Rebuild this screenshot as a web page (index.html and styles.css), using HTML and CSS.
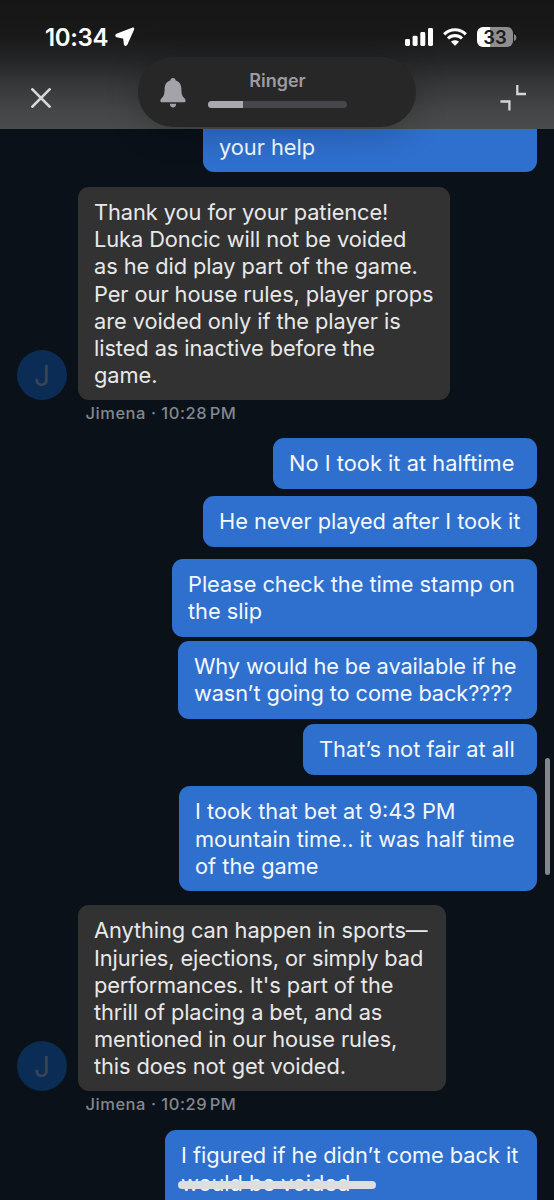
FILE: index.html
```html
<!DOCTYPE html>
<html lang="en">
<head>
<meta charset="utf-8">
<title>Support chat</title>
<link rel="stylesheet" href="styles.css">
</head>
<body>
<div class="phone">
  <header class="header">
    <div class="status">
      <div class="clock">
        <span class="time">10:34</span>
        <svg class="arrow" width="20" height="20" viewBox="0 0 20 20"><path d="M17.3 1.4 1.8 7.6C.8 8 .9 9.3 1.9 9.5L8.9 11 9.7 17.3C9.9 18.4 11.1 18.5 11.6 17.5L18.3 2.4C18.7 1.5 18.2 1 17.3 1.4Z" fill="#fff" stroke="#fff" stroke-width="1.6" stroke-linejoin="round"/></svg>
      </div>
      <div class="indicators">
        <svg width="28" height="18" viewBox="0 0 28 18" fill="#fff"><rect x="0" y="11" width="5" height="7" rx="1.4"/><rect x="7.6" y="7.8" width="5" height="10.2" rx="1.4"/><rect x="15.3" y="4" width="5" height="14" rx="1.4"/><rect x="23" y="0" width="5" height="18" rx="1.4"/></svg>
        <svg class="wifi" width="24" height="18" viewBox="0 0 24 18"><g fill="none" stroke="#fff" stroke-width="3.1"><path d="M1.2 6.3C7.3.2 16.7.2 22.8 6.3"/><path d="M5 10.5C9 6.7 15 6.7 19 10.5"/></g><path d="M8 13.8C10.2 11.8 13.8 11.8 16 13.8L12.6 17.2Q12 17.8 11.4 17.2Z" fill="#fff"/></svg>
        <div class="battery"><span>33</span></div>
        <svg class="nub" width="3" height="7" viewBox="0 0 3 7"><path d="M0 0Q2.4 1 2.4 3.5T0 7Z" fill="#8b8b8c"/></svg>
      </div>
    </div>
    <div class="toolbar">
      <svg width="20" height="20" viewBox="0 0 20 20"><path d="M1.4 1.4 18.6 18.6M18.6 1.4 1.4 18.6" stroke="#d8d8da" stroke-width="2.7" stroke-linecap="round"/></svg>
      <svg class="collapse" width="26" height="26" viewBox="0 0 26 26"><path d="M17.3 0V9H26M.4 16.5H9.4V25.6" fill="none" stroke="#d5d5d6" stroke-width="2.3"/></svg>
    </div>
  </header>
  <div class="ringer">
    <svg class="bell" width="26" height="30" viewBox="0 0 26 30" fill="#a4a3a9"><path d="M13 0C14.6 0 15.5 1 15.7 2.4 19.5 3.4 21.3 6.7 21.4 10.8 21.5 16 22 17.7 24 19.8 25.1 21 25.6 21.7 25.6 22.7 25.6 23.8 24.9 24.3 23.7 24.3H2.3C1.1 24.3.4 23.8.4 22.7.4 21.7.9 21 2 19.8 4 17.7 4.5 16 4.6 10.8 4.7 6.7 6.5 3.4 10.3 2.4 10.5 1 11.4 0 13 0Z"/><path d="M9.8 25.7H16.2C16 28.2 14.8 29.5 13 29.5S10 28.2 9.8 25.7Z"/></svg>
    <div class="ringer-level">
      <span>Ringer</span>
      <div class="track"><div class="fill"></div></div>
    </div>
  </div>
  <main class="chat">
    <div class="bubble sent clipped">your help</div>
    <section class="received-row first">
      <div class="avatar">J</div>
      <div class="bubble received patience">Thank you for your patience!<br>Luka Doncic will not be voided<br>as he did play part of the game.<br>Per our house rules, player props<br>are voided only if the player is<br>listed as inactive before the<br>game.</div>
    </section>
    <div class="meta">Jimena · 10:28<span class="thin-space"></span>PM</div>
    <div class="bubble sent halftime">No I took it at halftime</div>
    <div class="bubble sent never">He never played after I took it</div>
    <div class="bubble sent stamp">Please check the time stamp on<br>the slip</div>
    <div class="bubble sent why">Why would he be available if he<br>wasn’t going to come back????</div>
    <div class="bubble sent fair">That’s not fair at all</div>
    <div class="bubble sent bet">I took that bet at 9:43 PM<br>mountain time.. it was half time<br>of the game</div>
    <section class="received-row second">
      <div class="avatar">J</div>
      <div class="bubble received anything">Anything can happen in sports—<br>Injuries, ejections, or simply bad<br>performances. It's part of the<br>thrill of placing a bet, and as<br>mentioned in our house rules,<br>this does not get voided.</div>
    </section>
    <div class="meta">Jimena · 10:29<span class="thin-space"></span>PM</div>
    <div class="bubble sent figured">I figured if he didn’t come back it<br>would be voided</div>
  </main>
  <div class="scrollbar"></div>
  <div class="home-indicator"></div>
</div>
</body>
</html>
```
FILE: styles.css
```css
* { box-sizing: border-box; }
body { margin: 0; background: #0a1119; font-family: Inter, "Liberation Sans", sans-serif; }
svg { display: block; flex: none; }
.phone { position: relative; width: 554px; height: 1200px; overflow: hidden; background: #0a1119; }

.header { height: 129px; background: linear-gradient(#161616 0, #19191a 35px, #242526 60px, #37383a 85px, #454647 112px, #4a4b4b 129px); }
.status { display: flex; justify-content: space-between; height: 56px; padding: 27px 37px 0 45px; }
.clock { display: flex; align-items: flex-start; }
.time { width: 63px; font-size: 24px; line-height: 21px; font-weight: 600; letter-spacing: -0.35px; color: #fff; white-space: nowrap; }
.arrow { margin: 0 0 0 7px; }
.indicators { display: flex; align-items: flex-start; padding-top: 1px; }
.wifi { margin-left: 10px; }
.battery { width: 36px; height: 20px; margin: -1px 0 0 10px; border-radius: 6px; background: linear-gradient(90deg, #fff 35%, #8e8e8f 35%); color: #1b1b1c; font-size: 18.5px; line-height: 20px; font-weight: 600; text-align: center; }
.nub { margin: 6px 0 0 1px; }
.toolbar { display: flex; justify-content: space-between; align-items: flex-start; padding: 32px 28px 0 31px; }
.collapse { margin-top: -3px; }

.ringer { position: absolute; left: 138px; top: 57px; width: 278px; height: 70px; padding: 0 0 0 22px; border-radius: 35px; background: #272727; box-shadow: 0 4px 34px rgba(0, 0, 0, .24); display: flex; align-items: flex-start; }
.bell { margin-top: 21px; }
.ringer-level { width: 139px; margin-left: 22px; padding-top: 12.4px; text-align: center; color: #9c9ba1; font-size: 18px; line-height: 23px; font-weight: 600; }
.track { height: 7px; margin-top: 8.6px; border-radius: 4px; background: #47464b; overflow: hidden; }
.fill { width: 35px; height: 7px; background: #aaa9af; }

.chat { display: flex; flex-direction: column; height: 1071px; padding: 0 17px; overflow: hidden; }
.bubble { flex: none; padding: 12px 0 11.6px 16px; border-radius: 11px; font-size: 21.8px; line-height: 27.2px; letter-spacing: -0.04px; white-space: nowrap; }
.sent { align-self: flex-end; background: #2f6fce; color: #f3f8ff; }
.received { background: #323232; color: #e8e8e8; }
.clipped { width: 334px; height: 43px; padding-top: 4.5px; border-radius: 0 0 11px 11px; }
.received-row { flex: none; display: flex; align-items: flex-end; gap: 11px; }
.first { margin-top: 15px; }
.patience { width: 372px; height: 213px; letter-spacing: -0.07px; }
.avatar { width: 50px; height: 50px; border-radius: 50%; background: #0b2c54; color: #3a4655; font-size: 28px; line-height: 52px; text-align: center; }
.meta { flex: none; height: 20px; margin: 3px 0 0 68.5px; color: #83878e; font-size: 16.5px; line-height: 21px; font-weight: 500; letter-spacing: .53px; }
.thin-space { display: inline-block; width: 2.6px; }
.halftime { width: 264px; height: 51px; margin-top: 15.3px; letter-spacing: .03px; }
.never { width: 334px; height: 51px; margin-top: 6.7px; }
.stamp { width: 365px; height: 78px; margin-top: 12px; }
.why { width: 359px; height: 78px; margin-top: 4.3px; letter-spacing: -0.12px; }
.fair { width: 234px; height: 51px; margin-top: 4.7px; letter-spacing: .03px; }
.bet { width: 358px; height: 105px; margin-top: 11.5px; letter-spacing: 0; }
.second { margin-top: 14px; }
.anything { width: 368px; height: 186px; letter-spacing: -0.09px; }
.figured { width: 372px; height: 90px; margin-top: 16px; border-radius: 11px 11px 0 0; }

.scrollbar { position: absolute; left: 545px; top: 758px; width: 5px; height: 117px; border-radius: 3px; background: #84888c; }
.home-indicator { position: absolute; left: 178px; top: 1181px; width: 198px; height: 8px; border-radius: 4px; background: #dedede; }
```
